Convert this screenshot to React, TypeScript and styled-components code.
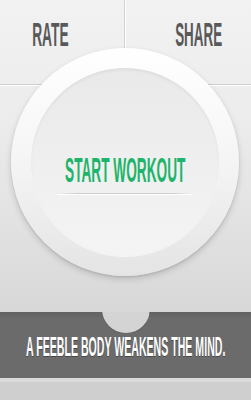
import React from "react";
import styled, { createGlobalStyle } from "styled-components";

const Global = createGlobalStyle`
  html, body { margin: 0; padding: 0; }
  body { width: 251px; height: 400px; overflow: hidden; font-family: "Liberation Sans", Arial, sans-serif; }
`;

const Page = styled.div`
  width: 251px;
  height: 400px;
  overflow: hidden;
  display: flex;
  flex-direction: column;
  background: linear-gradient(180deg, #f2f2f2 0px, #ececec 120px, #e2e2e2 220px, #d8d8d8 310px);
`;

const Nav = styled.div`
  display: grid;
  grid-template-columns: 124px 1fr;
  height: 84px;
  border-bottom: 1px solid #cfcfcf;
  box-shadow: 0 1px 0 #ffffff;
  flex-shrink: 0;
`;

const NavItem = styled.div<{ $side: "left" | "right" }>`
  display: flex;
  justify-content: center;
  padding-top: 18px;
  ${(p) => (p.$side === "left" ? "padding-right: 24px;" : "padding-left: 15px;")}
  ${(p) => (p.$side === "right" ? "border-left: 1px solid #d2d2d2; box-shadow: inset 1px 0 0 #ffffff;" : "")}
`;

const Condensed = styled.span<{ $size: number; $scale: number; $color: string }>`
  display: inline-block;
  white-space: nowrap;
  font-family: "Liberation Sans", Arial, sans-serif;
  font-weight: 700;
  font-size: ${(p) => p.$size}px;
  line-height: 1;
  color: ${(p) => p.$color};
  transform: scaleX(${(p) => p.$scale});
  transform-origin: center;
`;

const Outer = styled.div`
  align-self: center;
  margin-top: -37px;
  width: 228px;
  height: 228px;
  border-radius: 50%;
  position: relative;
  z-index: 1;
  flex-shrink: 0;
  background: linear-gradient(180deg, #ffffff 0%, #f6f6f6 45%, #e4e4e4 100%);
  box-shadow: 0 3px 6px rgba(0, 0, 0, 0.16), 0 1px 2px rgba(0, 0, 0, 0.1);
  display: flex;
  align-items: center;
  justify-content: center;
  margin-left: -1px;
`;

const Inner = styled.div`
  width: 188px;
  height: 188px;
  border-radius: 50%;
  background: linear-gradient(180deg, #e9e9e9 0%, #efefef 50%, #f4f4f4 100%);
  box-shadow: inset 0 2px 3px rgba(0, 0, 0, 0.05), 0 1px 1px rgba(255, 255, 255, 0.7);
  display: flex;
  flex-direction: column;
  align-items: center;
  padding-top: 84px;
  box-sizing: border-box;
`;

const Rule = styled.div`
  margin-top: 6px;
  width: 136px;
  height: 1px;
  background: linear-gradient(90deg, rgba(200,200,200,0) 0%, #cdcdcd 15%, #cdcdcd 85%, rgba(200,200,200,0) 100%);
  box-shadow: 0 1px 0 #ffffff;
`;

const Banner = styled.div`
  margin-top: 36px;
  height: 66px;
  flex-shrink: 0;
  position: relative;
  box-sizing: border-box;
  background: linear-gradient(180deg, #626262 0%, #6b6b6b 10%, #6b6b6b 100%);
  display: flex;
  justify-content: center;
  padding-top: 21px;
  &::before {
    content: "";
    position: absolute;
    left: 50%;
    top: -27px;
    width: 48px;
    height: 48px;
    margin-left: -24px;
    border-radius: 50%;
    background: #d4d4d4;
    box-shadow: 0 1px 1px rgba(0, 0, 0, 0.15);
    clip-path: inset(27px 0 0 0);
  }
`;

const BannerText = styled(Condensed)`
  text-shadow: 0 1px 1px rgba(0, 0, 0, 0.35);
`;

const Footer = styled.div`
  flex: 1;
  background: #cfcfcf;
  border-top: 4px solid #dadada;
`;

export default function App() {
  return (
    <Page>
      <Global />
      <Nav>
        <NavItem $side="left">
          <Condensed $size={33.5} $scale={0.41} $color="#595959">RATE</Condensed>
        </NavItem>
        <NavItem $side="right">
          <Condensed $size={33.5} $scale={0.4} $color="#595959">SHARE</Condensed>
        </NavItem>
      </Nav>
      <Outer>
        <Inner>
          <Condensed $size={35} $scale={0.39} $color="#1fb46b">START WORKOUT</Condensed>
          <Rule />
        </Inner>
      </Outer>
      <Banner>
        <BannerText $size={28} $scale={0.378} $color="#ffffff">A FEEBLE BODY WEAKENS THE MIND.</BannerText>
      </Banner>
      <Footer />
    </Page>
  );
}
